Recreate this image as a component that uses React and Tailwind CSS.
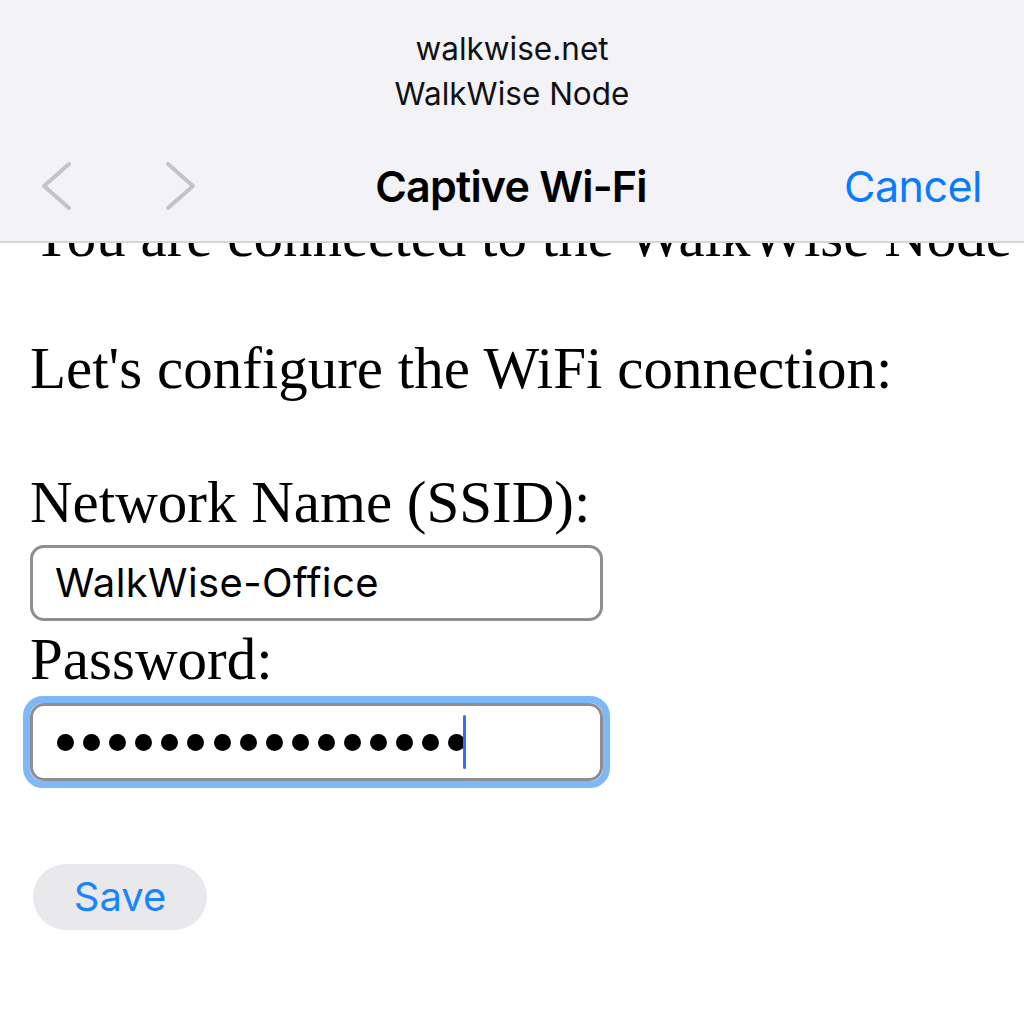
import React from 'react';

const sf = { fontFamily: 'Inter, "Noto Sans", sans-serif' };

const Chevron = ({ dir }) => (
  <svg width="34" height="52" viewBox="0 0 34 52" fill="none">
    <polyline
      points={dir === 'left' ? '29,4 4,26 29,48' : '5,4 30,26 5,48'}
      stroke="#c4c4c7"
      strokeWidth="4"
      strokeLinecap="round"
      strokeLinejoin="round"
    />
  </svg>
);

export default function App() {
  const dots = Array.from({ length: 16 });

  return (
    <div className="w-[1024px] h-[1024px] bg-white overflow-hidden flex flex-col">
      {/* Captive portal sheet header */}
      <header
        className="h-[243px] shrink-0 bg-[#f2f2f7] border-b-2 border-[#d6d6d9] relative z-10 flex flex-col"
        style={sf}
      >
        <div className="pt-[26px] text-center text-[31.5px] leading-[45px] text-[#111]">
          <div>walkwise.net</div>
          <div>WalkWise Node</div>
        </div>
        <div className="mt-[40px] h-[60px] flex items-center">
          <div className="flex-1 flex items-center gap-[89px] pl-[40px]">
            <Chevron dir="left" />
            <Chevron dir="right" />
          </div>
          <div className="text-[43px] leading-[60px] font-semibold text-black tracking-[-0.8px]">
            Captive Wi-Fi
          </div>
          <div className="flex-1 flex justify-end pr-[42px]">
            <span className="text-[43px] leading-[60px] text-[#0a7aff] tracking-[-0.5px]">Cancel</span>
          </div>
        </div>
      </header>

      {/* Scrolled page content */}
      <main className="flex-1 overflow-hidden">
        <div
          className="-mt-[39px] pl-[30px] text-black text-[59px] leading-[64px]"
          style={{ fontFamily: '"Liberation Serif", "Times New Roman", serif' }}
        >
          <p className="whitespace-nowrap">You are connected to the WalkWise Node</p>
          <p className="mt-[68px] whitespace-nowrap">Let's configure the WiFi connection:</p>
          <p className="mt-[70px] whitespace-nowrap">Network Name (SSID):</p>

          <div
            className="mt-[11px] w-[573px] h-[76px] border-[3px] border-[#8e8e93] rounded-[14px] bg-white flex items-center pl-[22px] text-[40px] tracking-[0.4px] text-black"
            style={sf}
          >
            WalkWise-Office
          </div>

          <p className="mt-[6px] whitespace-nowrap">Password:</p>

          <div className="mt-[5px] -ml-[7px] w-[587px] h-[92px] rounded-[20px] border-[7px] border-[#7db8f9]">
            <div className="w-full h-full border-[3px] border-[#8e8e93] rounded-[14px] bg-white flex items-center pl-[24px]">
              <div className="flex items-center gap-[9.1px]">
                {dots.map((_, i) => (
                  <span key={i} className="w-[17px] h-[17px] rounded-full bg-black" />
                ))}
              </div>
              <span className="w-[3px] h-[54px] -ml-[2px] rounded-full bg-[#3c6cf4]" />
            </div>
          </div>

          <button
            className="mt-[76px] ml-[3px] w-[174px] h-[66px] rounded-full bg-[#e9e9eb] text-[40px] text-[#1a84ff] flex items-center justify-center"
            style={sf}
          >
            Save
          </button>
        </div>
      </main>
    </div>
  );
}
